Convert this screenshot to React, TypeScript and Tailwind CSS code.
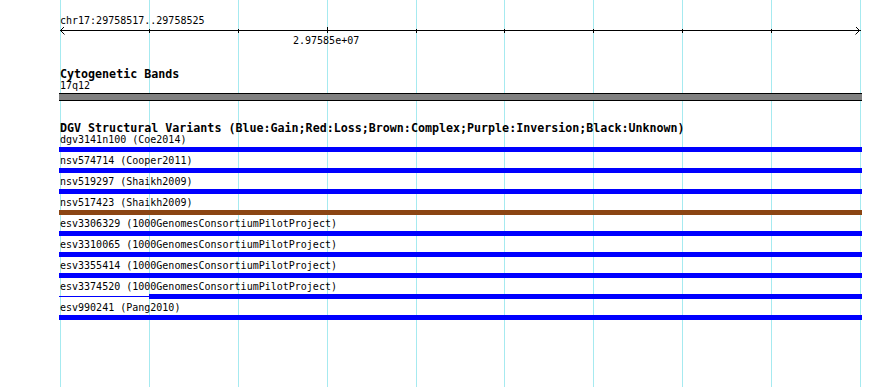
const gridXs = [60, 149, 238, 327, 416, 504, 593, 682, 771, 860];
const tickXs = [149, 238, 416, 504, 593, 682, 771];

type Variant = { label: string; color: "blue" | "brown"; partial?: boolean };

const variants: Variant[] = [
  { label: "dgv3141n100 (Coe2014)", color: "blue" },
  { label: "nsv574714 (Cooper2011)", color: "blue" },
  { label: "nsv519297 (Shaikh2009)", color: "blue" },
  { label: "nsv517423 (Shaikh2009)", color: "brown" },
  { label: "esv3306329 (1000GenomesConsortiumPilotProject)", color: "blue" },
  { label: "esv3310065 (1000GenomesConsortiumPilotProject)", color: "blue" },
  { label: "esv3355414 (1000GenomesConsortiumPilotProject)", color: "blue" },
  { label: "esv3374520 (1000GenomesConsortiumPilotProject)", color: "blue", partial: true },
  { label: "esv990241 (Pang2010)", color: "blue" },
];

function Grid() {
  return (
    <svg className="absolute inset-0" width={890} height={387}>
      {gridXs.map((x) => (
        <line key={x} x1={x + 0.5} x2={x + 0.5} y1={0} y2={387} stroke="#a6eaf0" strokeWidth={1} />
      ))}
    </svg>
  );
}

function Ruler() {
  return (
    <svg width={890} height={9} className="block">
      <g stroke="#000" strokeWidth={1} fill="none" shapeRendering="crispEdges">
        <line x1={60} x2={861} y1={3.5} y2={3.5} />
        {tickXs.map((x) => (
          <line key={x} x1={x + 0.5} x2={x + 0.5} y1={2} y2={6} />
        ))}
        <line x1={327.5} x2={327.5} y1={-2} y2={6} />
      </g>
      <g stroke="#000" strokeWidth={1} fill="none">
        <polyline points="64.5,-0.5 60.5,3.5 64.5,7.5" />
        <polyline points="855.5,-0.5 859.5,3.5 855.5,7.5" />
      </g>
    </svg>
  );
}

function VariantRow({ v }: { v: Variant }) {
  const bg = v.color === "brown" ? "bg-[#8b4513]" : "bg-[#0000ff]";
  return (
    <div className="pb-[4px]">
      <div className="pl-px h-[10px] leading-[10px] whitespace-pre">{v.label}</div>
      {v.partial ? (
        <div className="mt-[2px] flex items-center h-[5px]">
          <div className={`w-[90px] h-px ${bg}`} />
          <div className={`w-[713px] h-[5px] ${bg}`} />
        </div>
      ) : (
        <div className={`mt-[2px] w-[803px] h-[5px] ${bg}`} />
      )}
    </div>
  );
}

export default function App() {
  return (
    <div className="relative w-[890px] h-[387px] bg-white overflow-hidden text-black font-['DejaVu_Sans_Mono','Liberation_Mono',monospace] text-[10px] leading-[10px]">
      <Grid />
      <div className="relative">
        <div className="pt-[16px] pl-[60px] h-[27px] whitespace-pre">chr17:29758517..29758525</div>
        <Ruler />
        <div className="pl-[293px] h-[10px] whitespace-pre">2.97585e+07</div>

        <div className="mt-[22px] pl-[60px] h-[13px] text-[11.67px] leading-[12px] font-bold whitespace-pre">
          Cytogenetic Bands
        </div>
        <div className="pl-[60px] h-[10px] whitespace-pre">17q12</div>
        <div className="ml-[59px] mt-[2px] w-[803px] h-[8px] border-y border-black bg-[#808080]" />

        <div className="ml-[59px] mt-[21px]">
          <div className="pl-px h-[13px] text-[11.67px] leading-[12px] font-bold whitespace-pre">
            DGV Structural Variants (Blue:Gain;Red:Loss;Brown:Complex;Purple:Inversion;Black:Unknown)
          </div>
          {variants.map((v) => (
            <VariantRow key={v.label} v={v} />
          ))}
        </div>
      </div>
    </div>
  );
}
